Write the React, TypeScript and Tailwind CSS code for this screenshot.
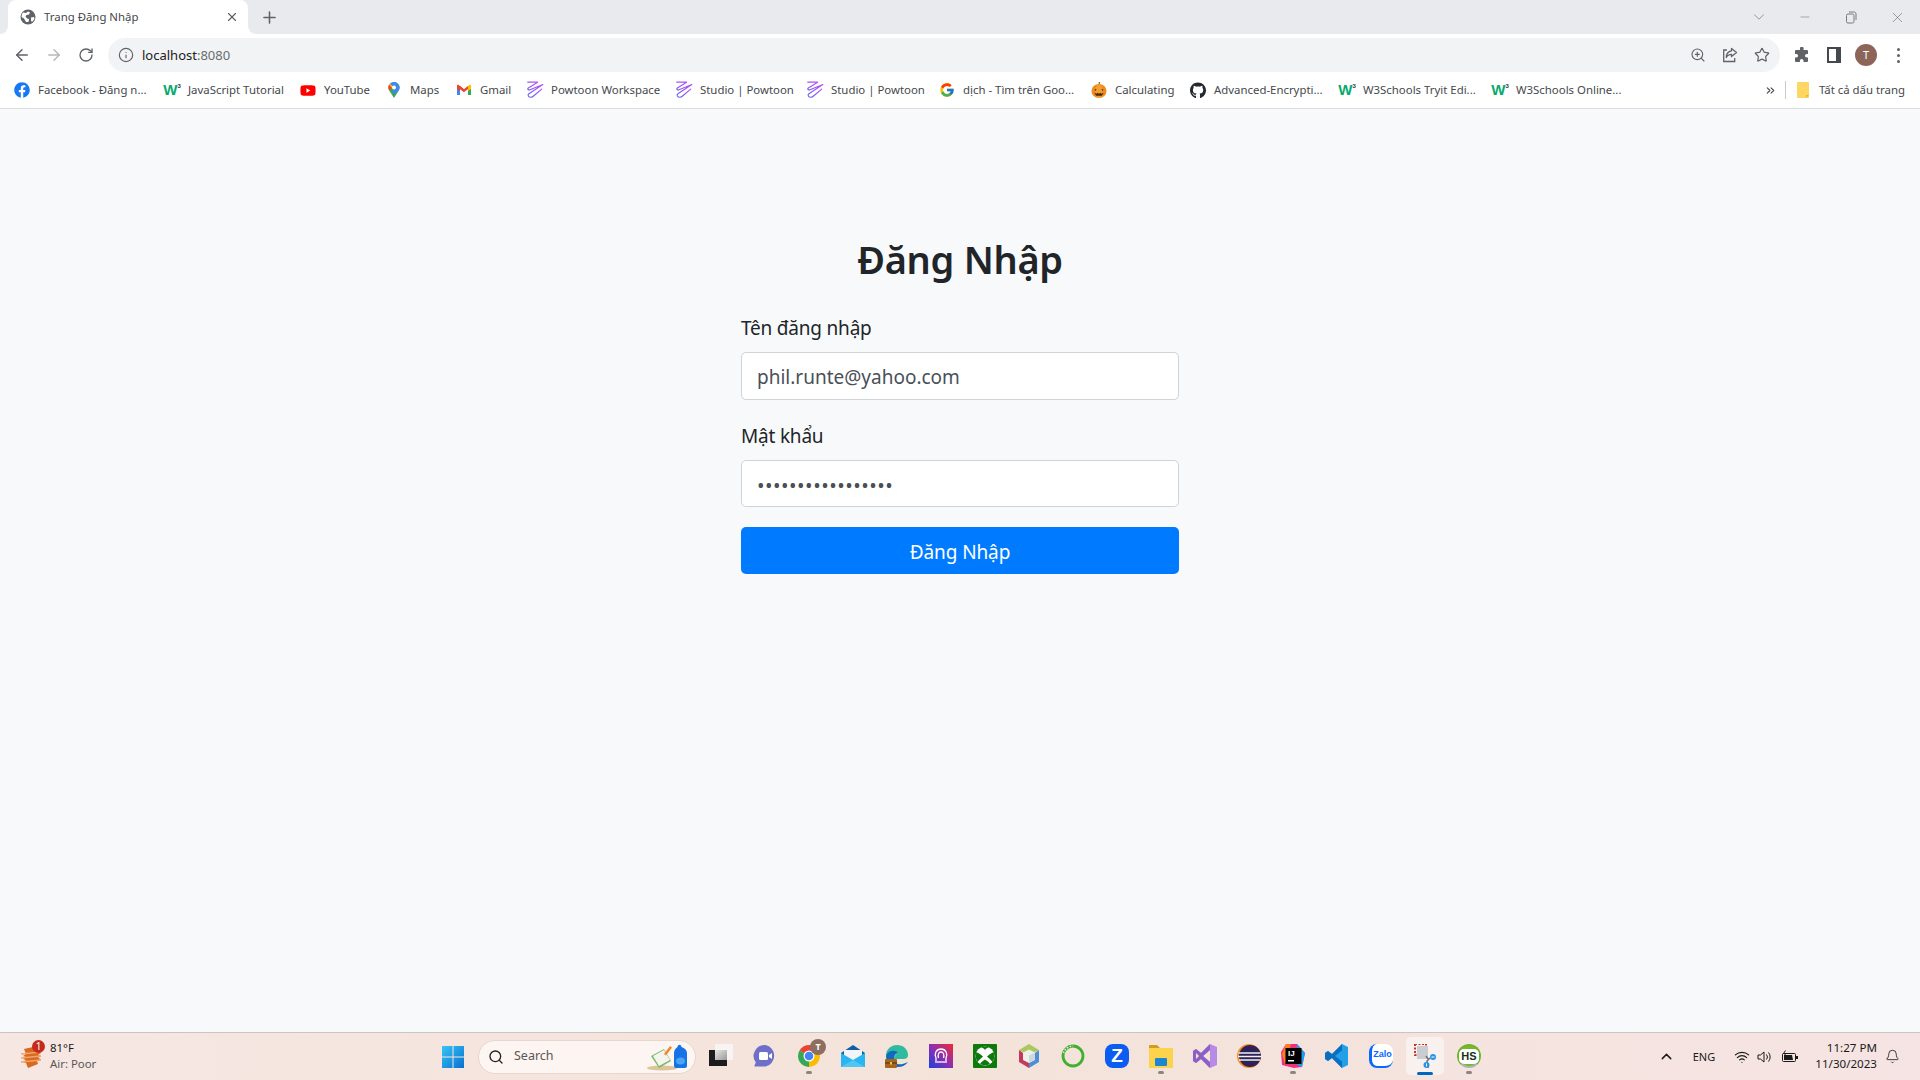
import React from "react";
import { ArrowLeft, ArrowRight, RotateCw, Info, ZoomIn, Star, Plus, X, ChevronDown, Minus, ChevronUp, Search, Bell, Wifi, ChevronsRight } from "lucide-react";
import { FaFacebook, FaGithub, FaYoutube } from "react-icons/fa";
import { FcGoogle } from "react-icons/fc";

function Globe() {
  return (
    <svg width="16" height="16" viewBox="0 0 16 16">
      <circle cx="8" cy="8" r="7.5" fill="#5f6368" />
      <path d="M3 3.5l3 .5 2-1.5 2 1-1 2-2.5.5-1 1.5 1.5 2 2 .5-.5 3L6 13 4 9.5 1.5 8 2 5z" fill="#fff" />
      <path d="M11 8.5l3-.5.5 2-2.5 3-1-1.5z" fill="#fff" />
    </svg>
  );
}

function W3() {
  return (
    <span className="flex h-4 w-4 items-start justify-center">
      <span className="font-['Liberation_Sans'] text-[15px] leading-4 font-bold text-[#04aa6d]">W</span>
      <span className="font-['Liberation_Sans'] text-[6px] leading-2 font-bold text-[#333]">3</span>
    </span>
  );
}

function Powtoon({ id }: { id: string }) {
  return (
    <svg width="18" height="18" viewBox="2 1 14.500 15.500" fill="none" className="shrink-0">
      <defs>
        <linearGradient id={id} x1="1" y1="17" x2="17" y2="1" gradientUnits="userSpaceOnUse">
          <stop offset="0" stopColor="#4b6cf5" />
          <stop offset="1" stopColor="#d946ef" />
        </linearGradient>
      </defs>
      <path d="M3 2h8.500L3.500 7c-1.200 1 .2 2 1.500 1.500L16 4 4 12c-1.600 1.200-.2 3 1.500 3 1 0 2-.5 3-1.500L15 8" stroke={`url(#${id})`} strokeWidth="1" strokeLinejoin="round" strokeLinecap="round" />
    </svg>
  );
}

function Maps() {
  return (
    <svg width="16" height="16" viewBox="0 0 16 16">
      <path d="M8 0a5.600 5.600 0 0 0-5.600 5.600c0 1.200.4 2.200 1 3.100L8 16l4.600-7.300c.6-.9 1-1.900 1-3.100A5.600 5.600 0 0 0 8 0z" fill="#34a853" />
      <path d="M3.400 8.700L8 3.200 4 1.800A5.600 5.600 0 0 0 2.400 5.600c0 1.200.4 2.200 1 3.100z" fill="#fbbc04" />
      <path d="M4 1.800L8 5.600l4.500-3.400A5.600 5.600 0 0 0 8 0a5.600 5.600 0 0 0-4 1.800z" fill="#4285f4" />
      <path d="M12.500 2.200L6 9.800 8 12l4.600-3.300c.6-.9 1-1.900 1-3.100 0-1.300-.4-2.400-1.100-3.400z" fill="#4285f4" />
      <path d="M2.900 2.800l3.200 3.100-2.700 2.800c-.6-.9-1-1.900-1-3.100 0-1 .2-2 .5-2.800z" fill="#ea4335" />
      <circle cx="8" cy="5.600" r="2" fill="#fff" />
    </svg>
  );
}

function Gmail() {
  return (
    <svg width="16" height="16" viewBox="0 0 16 16">
      <path d="M1 3.500V13h3V7l4 3V7.500L3 3.200C2 2.500 1 2.800 1 3.500z" fill="#ea4335" />
      <path d="M15 3.500V13h-3V7l-4 3V7.500l5-4.300c1-.7 2-.4 2 .3z" fill="#fbbc04" />
      <path d="M12 13h3V7l-3 2z" fill="#34a853" />
      <path d="M1 13h3V9L1 7z" fill="#4285f4" />
      <path d="M4 4l4 3.200L12 4v3l-4 3-4-3z" fill="#ea4335" />
    </svg>
  );
}

function Pumpkin() {
  return (
    <svg width="17" height="18" viewBox="0 0 17 18">
      <path d="M8 3l.3-2.500h1.500L9 3z" fill="#4a7a25" />
      <ellipse cx="8.500" cy="10" rx="8" ry="7.500" fill="#ee8a1d" />
      <ellipse cx="8.500" cy="10" rx="4" ry="7.500" fill="#f49c2e" />
      <path d="M4 8l2 .5-1.500 1.500zM13 8l-2 .5 1.500 1.500zM3.500 12l2.500 1 1-1 1.500 1 1.500-1 1 1 2.500-1-2 3H5.500z" fill="#4a2a0c" />
    </svg>
  );
}

type BM = { label: string; w: string; icon: React.ReactNode; iw?: string };
const bookmarks: BM[] = [
  { label: "Facebook - Đăng n...", w: "w-[150px]", icon: <FaFacebook size={16} color="#1877f2" /> },
  { label: "JavaScript Tutorial", w: "w-[136px]", icon: <W3 /> },
  { label: "YouTube", w: "w-[86px]", icon: <FaYoutube size={17} color="#f00" /> },
  { label: "Maps", w: "w-[70px]", icon: <Maps /> },
  { label: "Gmail", w: "w-[70px]", icon: <Gmail /> },
  { label: "Powtoon Workspace", w: "w-[149px]", icon: <Powtoon id="p1" />, iw: "w-[17px]" },
  { label: "Studio | Powtoon", w: "w-[131px]", icon: <Powtoon id="p2" />, iw: "w-[17px]" },
  { label: "Studio | Powtoon", w: "w-[133px]", icon: <Powtoon id="p3" />, iw: "w-[17px]" },
  { label: "dịch - Tìm trên Goo...", w: "w-[152px]", icon: <FcGoogle size={16} /> },
  { label: "Calculating", w: "w-[99px]", icon: <Pumpkin /> },
  { label: "Advanced-Encrypti...", w: "w-[149px]", icon: <FaGithub size={17} color="#24292e" /> },
  { label: "W3Schools Tryit Edi...", w: "w-[153px]", icon: <W3 /> },
  { label: "W3Schools Online...", w: "w-[150px]", icon: <W3 /> },
];

function TabBar() {
  return (
    <div className="flex h-[34px] items-center bg-[#e8eaed] pl-2 text-[#5f6368]">
      <div className="relative flex h-[34px] w-[240px] items-center rounded-t-lg bg-white pr-[9px] pl-3">
        <span className="absolute bottom-0 -left-2 h-2 w-2 bg-white">
          <span className="block h-2 w-2 rounded-br-lg bg-[#e8eaed]" />
        </span>
        <span className="absolute -right-2 bottom-0 h-2 w-2 bg-white">
          <span className="block h-2 w-2 rounded-bl-lg bg-[#e8eaed]" />
        </span>
        <Globe />
        <span className="ml-2 flex-1 text-[11.400px] text-[#45474a]">Trang Đăng Nhập</span>
        <X size={14} strokeWidth={2} />
      </div>
      <span className="ml-[12px]">
        <Plus size={19} strokeWidth={2} />
      </span>
      <div className="ml-auto flex items-center text-[#777a7e]">
        <span className="flex w-[46px] justify-center"><ChevronDown size={18} strokeWidth={1} /></span>
        <span className="flex w-[46px] justify-center"><Minus size={14} strokeWidth={1} /></span>
        <span className="flex w-[46px] justify-center">
          <svg width="12" height="13" viewBox="0 0 12 13" fill="none" stroke="currentColor" strokeWidth="1">
            <rect x="1.500" y="3" width="7.500" height="9" rx="1.500" />
            <path d="M4 1h4.500A2 2 0 0 1 11 3v6" />
          </svg>
        </span>
        <span className="flex w-[46px] justify-center"><X size={17} strokeWidth={1} /></span>
      </div>
    </div>
  );
}

function ToolBtn({ children }: { children: React.ReactNode }) {
  return <span className="flex w-8 items-center justify-center">{children}</span>;
}

function Toolbar() {
  return (
    <div className="flex h-[38px] bg-white pt-1 text-[#5f6368]">
      <div className="flex w-[108px] pl-[6px]">
        <ToolBtn><ArrowLeft size={18} strokeWidth={2} /></ToolBtn>
        <ToolBtn><ArrowRight size={18} strokeWidth={2} color="#b6b8bb" /></ToolBtn>
        <ToolBtn><RotateCw size={16} strokeWidth={2} /></ToolBtn>
      </div>
      <div className="flex h-[34px] w-[1672px] items-center rounded-full bg-[#f1f3f4] pr-[2px] pl-[10px]">
        <Info size={16} strokeWidth={1.700} />
        <span className="ml-2 pt-[2px] text-[13px] text-[#202124]">
          localhost<span className="text-[#6a6d70]">:8080</span>
        </span>
        <div className="ml-auto flex">
          <ToolBtn><ZoomIn size={16} strokeWidth={1.700} /></ToolBtn>
          <ToolBtn>
            <svg width="16" height="16" viewBox="0 0 16 16" fill="none" stroke="currentColor" strokeWidth="1.300">
              <path d="M5 3H1.700v11.500h11V11" />
              <path d="M9.500 1.500L14.500 5.500 9.500 9.500V7.300C7 7.300 5.200 8.500 4.300 10.500 4.300 7 6.300 4.300 9.500 3.800z" strokeLinejoin="round" />
            </svg>
          </ToolBtn>
          <ToolBtn><Star size={16} strokeWidth={1.800} /></ToolBtn>
        </div>
      </div>
      <div className="ml-[6px] flex">
        <ToolBtn>
          <svg width="16" height="16" viewBox="0 0 16 16" fill="#5f6368">
            <path d="M6 1.500a1.800 1.800 0 0 1 3.600 0V3H13a1 1 0 0 1 1 1v3h-1.200a1.800 1.800 0 0 0 0 3.600H14V14a1 1 0 0 1-1 1H9.500v-1.200a1.800 1.800 0 0 0-3.600 0V15H2a1 1 0 0 1-1-1v-3.500h1.300a1.800 1.800 0 0 0 0-3.600H1V4a1 1 0 0 1 1-1h4z" />
          </svg>
        </ToolBtn>
        <ToolBtn>
          <svg width="14" height="16" viewBox="0 0 14 16">
            <path d="M0 0h14v16H0z" fill="#45484c" />
            <path d="M2 2h7v12H2z" fill="#fff" />
          </svg>
        </ToolBtn>
        <ToolBtn>
          <span className="flex h-[22px] w-[22px] items-center justify-center rounded-full bg-[#8d6558] text-[11px] text-white">T</span>
        </ToolBtn>
        <ToolBtn>
          <span className="flex flex-col gap-[3px]">
            <span className="h-[3px] w-[3px] rounded-full bg-[#5f6368]" />
            <span className="h-[3px] w-[3px] rounded-full bg-[#5f6368]" />
            <span className="h-[3px] w-[3px] rounded-full bg-[#5f6368]" />
          </span>
        </ToolBtn>
      </div>
    </div>
  );
}

function BookmarkBar() {
  return (
    <div className="flex h-[37px] items-center border-b border-[#dadce0] bg-white pl-[14px] text-[11.400px] text-[#45484c]">
      {bookmarks.map((b, i) => (
        <div key={i} className={`flex shrink-0 items-center ${b.w}`}>
          <span className={`flex h-[18px] items-center justify-center ${b.iw ?? "w-4"}`}>{b.icon}</span>
          <span className="ml-2 whitespace-nowrap">{b.label}</span>
        </div>
      ))}
      <div className="ml-auto flex items-center">
        <ChevronsRight size={13} strokeWidth={2} />
        <span className="mr-[11px] ml-[8px] h-[18px] w-px bg-[#c8cacd]" />
        <svg width="12" height="16" viewBox="0 0 12 16">
          <path d="M1 0h10a1 1 0 0 1 1 1v15H1a1 1 0 0 1-1-1V1a1 1 0 0 1 1-1z" fill="#fdd663" />
          <path d="M9 16v-3h3z" fill="#f2b90f" />
        </svg>
        <span className="mr-[15px] ml-[10px] whitespace-nowrap">Tất cả dấu trang</span>
      </div>
    </div>
  );
}

function LoginForm() {
  return (
    <main className="flex flex-1 flex-col items-center bg-[#f8f9fa] pt-[125px]">
      <div className="flex w-[438px] flex-col">
        <h1 className="h-[52px] text-center text-[38px] leading-[50px] font-semibold tracking-[-0.3px] text-[#212529]">Đăng Nhập</h1>
        <label className="mt-[27px] h-[30px] text-[19px] leading-[30px] tracking-[-0.2px] text-[#212529]">Tên đăng nhập</label>
        <input
          readOnly
          value="phil.runte@yahoo.com"
          className="mt-[9px] h-[48px] rounded-[5px] border border-[#ced4da] bg-white px-[15px] pt-[2px] text-[19px] text-[#495057] outline-none"
        />
        <label className="mt-[21px] h-[30px] text-[19px] leading-[30px] tracking-[-0.2px] text-[#212529]">Mật khẩu</label>
        <input
          readOnly
          type="password"
          value="aaaaaaaaaaaaaaaaa"
          className="mt-[9px] h-[47px] rounded-[5px] border border-[#ced4da] bg-white px-[15px] pt-[4px] text-[20px] tracking-[0.5px] text-[#495057] outline-none"
        />
        <button className="mt-[20px] h-[47px] rounded-[5px] bg-[#007bff] pt-[4px] text-[19px] tracking-[-0.1px] text-white">Đăng Nhập</button>
      </div>
    </main>
  );
}

function TaskIcon({ children, dot, active, first }: { children: React.ReactNode; dot?: boolean; active?: boolean; first?: boolean }) {
  return (
    <div className={`relative flex h-full w-[44px] shrink-0 items-center justify-center ${first ? "ml-[3px]" : ""}`}>
      {active && <span className="absolute top-[4px] left-[3px] h-[38px] w-[38px] rounded-[5px] bg-[#f8f1ee]" />}
      <span className="relative mb-[1px] flex h-6 w-6 items-center justify-center">{children}</span>
      {dot && <span className="absolute bottom-[6px] left-[19px] h-[3px] w-[6px] rounded-full bg-[#8a8685]" />}
      {active && <span className="absolute bottom-[5px] left-[14px] h-[3px] w-4 rounded-full bg-[#0067c0]" />}
    </div>
  );
}

function Taskbar() {
  return (
    <footer className="flex h-[48px] items-center border-t border-[#c9c5c2] bg-linear-to-r from-[#f6e7e3] via-[#f4e3d9] to-[#f5e4e3] text-[#1a1a1a]">
      <div className="flex h-full w-[430px] shrink-0 items-center pl-[21px]">
        <div className="relative mt-[1px] h-[23px] w-[21px]">
          <svg width="21" height="23" viewBox="0 0 21 23">
            <path d="M3 3l9-2 5 1-1 4 4 1-3 2 3 1-3 2 3 1-4 2 1 3-10 4-2-5-3-1 3-2-3-1 3-2-3-1 3-2z" fill="#d9691e" />
            <path d="M0 8l20-2M0 12l20-2M0 16l20-2" stroke="#f3a46b" strokeWidth="1.300" />
          </svg>
          <span className="absolute -top-[6px] left-[11px] flex h-[13px] w-[13px] items-center justify-center rounded-full bg-[#c42b1c] text-[10px] leading-none text-white">1</span>
        </div>
        <div className="mb-[2px] ml-2 flex flex-col text-[11.400px] leading-[16px]">
          <span>81°F</span>
          <span className="text-[#5a5654]">Air: Poor</span>
        </div>
      </div>
      <div className="flex w-[45px] shrink-0 justify-center">
        <svg width="24" height="24" viewBox="0 0 24 24">
          <defs>
            <linearGradient id="win" x1="0" y1="0" x2="1" y2="1">
              <stop offset="0" stopColor="#36c5f5" />
              <stop offset="1" stopColor="#0a6fcf" />
            </linearGradient>
          </defs>
          <path d="M1 1h10.500v10.500H1zM12.500 1H23v10.500H12.500zM1 12.500h10.500V23H1zM12.500 12.500H23V23H12.500z" fill="url(#win)" />
        </svg>
      </div>
      <div className="ml-[3px] flex h-[34px] w-[218px] shrink-0 items-center rounded-full border border-[#e6d8d1] bg-[#fdf5f1] pl-[9px]">
        <Search size={16} strokeWidth={2} color="#222" />
        <span className="ml-[10px] text-[12.500px] text-[#5b5654]">Search</span>
        <svg className="mr-[7px] ml-auto" width="41" height="30" viewBox="0 0 41 30">
          <ellipse cx="15" cy="26" rx="15" ry="2.500" fill="#dcc59b" />
          <path d="M4 14l13-7 7 12-12 7z" fill="#7cb86a" />
          <path d="M6 14l11-6 6 10-11 6z" fill="#f3f4ee" />
          <path d="M17 12l6-8 2 1.500-6 8z" fill="#f08a24" />
          <path d="M27 24V11c0-3 2-5 3.500-6 .5-3 3.500-3 4 0 3 1 5.500 3 5.500 6v13c0 1-1 2-2 2H29c-1 0-2-1-2-2z" fill="#1673e6" />
          <ellipse cx="33.500" cy="19" rx="4.500" ry="3.500" fill="#49a4f5" />
        </svg>
      </div>

      <TaskIcon first>
        <svg width="24" height="24" viewBox="0 0 24 24">
          <defs>
            <linearGradient id="tv" x1="0" y1="0" x2="1" y2="1">
              <stop offset="0" stopColor="#e9e7e5" />
              <stop offset="1" stopColor="#9b9997" />
            </linearGradient>
          </defs>
          <rect x="0" y="6" width="18" height="16" fill="#1c1c1c" />
          <rect x="6" y="0" width="18" height="16" fill="#f7f5f3" />
          <rect x="6" y="6" width="12" height="10" fill="url(#tv)" />
        </svg>
      </TaskIcon>
      <TaskIcon>
        <svg width="24" height="24" viewBox="0 0 24 24">
          <path d="M12.500 1a11 11 0 0 1 0 21.500H2c-.5 0-.8-.4-.5-1l1.300-3A11 11 0 0 1 12.500 1z" fill="#6e6fc9" />
          <rect x="6" y="8" width="9" height="8" rx="1.500" fill="#fff" />
          <path d="M16 11l3-2v6l-3-2z" fill="#fff" />
        </svg>
      </TaskIcon>
      <TaskIcon dot>
        <svg width="24" height="24" viewBox="0 0 24 24">
          <path d="M12 12L2.500 6.500A11 11 0 0 1 21.500 6.500z" fill="#ea4335" />
          <path d="M12 12L21.500 6.500A11 11 0 0 1 12 23z" fill="#fbbc04" />
          <path d="M12 12L12 23A11 11 0 0 1 2.500 6.500z" fill="#34a853" />
          <circle cx="12" cy="12" r="5.500" fill="#fff" />
          <circle cx="12" cy="12" r="4.300" fill="#4285f4" />
        </svg>
        <span className="absolute -top-[5px] left-[13px] flex h-4 w-4 items-center justify-center rounded-full bg-[#8d6e60] text-[9px] font-bold text-white">T</span>
      </TaskIcon>
      <TaskIcon>
        <svg width="24" height="24" viewBox="0 0 24 24">
          <path d="M12 1L0 9v14h24V9z" fill="#0f5fa8" />
          <path d="M3 6h18v6l-9 5-9-5z" fill="#f2f5f8" />
          <path d="M0 9l12 7 12-7v14H0z" fill="#29b6f0" />
          <path d="M0 23l12-7 12 7z" fill="#4fc6f5" />
        </svg>
      </TaskIcon>
      <TaskIcon>
        <svg width="24" height="24" viewBox="0 0 24 24">
          <path d="M1 12C1 5 6 1 12 1c6 0 11 4 11 10 0 3-2 4-5 4H9c0-4 3-6 5-6-2-2-6-1-9 1z" fill="#2fbb9d" />
          <path d="M1 12c1-3 4-6 9-5 3 1 4 2 4 2-3 0-5 2-5 6 0 4 4 8 14 3-2 3-6 5-10 5C6 23 1 18 1 12z" fill="#0f6bc2" />
          <rect x="0" y="15" width="12" height="9" rx="1" fill="#a5651e" />
          <rect x="0" y="18" width="12" height="2" fill="#7c4912" />
          <rect x="5" y="18" width="2" height="2.500" fill="#f0c14b" />
        </svg>
      </TaskIcon>
      <TaskIcon>
        <svg width="24" height="24" viewBox="0 0 24 24">
          <defs>
            <linearGradient id="cam" x1="0" y1="1" x2="1" y2="0">
              <stop offset="0" stopColor="#1b3fe0" />
              <stop offset="0.5" stopColor="#8e2fb0" />
              <stop offset="1" stopColor="#ee2a35" />
            </linearGradient>
          </defs>
          <rect width="24" height="24" fill="url(#cam)" />
          <path d="M7 17v-3c-2-4 0-9 5-9s7 5 5 9v3M9.500 14c-1-3 0-6 2.500-6s3.500 3 2.500 6" fill="none" stroke="#fff" strokeWidth="1.300" />
          <path d="M6 18h12" stroke="#fff" strokeWidth="1.300" />
        </svg>
      </TaskIcon>
      <TaskIcon>
        <svg width="24" height="24" viewBox="0 0 24 24">
          <rect width="24" height="24" rx="1" fill="#0e7a0d" />
          <circle cx="12" cy="12" r="9.500" fill="#fff" />
          <path d="M8 3.200Q12 4.500 12 6.500Q12 4.500 16 3.200Q12 2 8 3.200z" fill="#0e7a0d" />
          <path d="M3.500 8Q7 9.500 10 12.500Q6 16 4.500 18Q1.500 13 3.500 8z" fill="#0e7a0d" />
          <path d="M20.500 8Q17 9.500 14 12.500Q18 16 19.500 18Q22.500 13 20.500 8z" fill="#0e7a0d" />
          <path d="M12 15.500Q8.500 17.500 7 20Q12 22.500 17 20Q15.500 17.500 12 15.500z" fill="#0e7a0d" />
        </svg>
      </TaskIcon>
      <TaskIcon>
        <svg width="24" height="24" viewBox="0 0 24 24">
          <path d="M12 0l10 6L12 11 2 6z" fill="#a9c95f" />
          <path d="M2 6v12l10 6V19l-6-3V9z" fill="#c33a5c" />
          <path d="M22 6v12l-10 6V19l6-3V9z" fill="#4d8fd6" />
          <path d="M6 8.500l6-3 6 3v7l-6 3-6-3z" fill="#eef0ea" />
          <path d="M12 11.500l6-3v7l-6 3z" fill="#cfd6dc" />
        </svg>
      </TaskIcon>
      <TaskIcon>
        <svg width="24" height="24" viewBox="0 0 24 24" fill="none">
          <circle cx="12" cy="12" r="10" stroke="#3fb02f" strokeWidth="2.800" />
          <path d="M2.500 9A10 10 0 0 1 12 2" stroke="#f4e3d9" strokeWidth="1.500" strokeDasharray="1.500 1.500" />
        </svg>
      </TaskIcon>
      <TaskIcon>
        <span className="flex h-6 w-6 items-center justify-center rounded-[8px] bg-[#0b5cf0] font-['Liberation_Sans'] text-[19px] font-bold text-white">Z</span>
      </TaskIcon>
      <TaskIcon dot>
        <svg width="24" height="24" viewBox="0 0 24 24">
          <path d="M0 2a1 1 0 0 1 1-1h7l3 3h12a1 1 0 0 1 1 1v3H0z" fill="#d69a1c" />
          <rect x="0" y="4" width="24" height="20" rx="1" fill="#fbd34d" />
          <rect x="6" y="14" width="12" height="8" rx="1" fill="#1b87d1" />
        </svg>
      </TaskIcon>
      <TaskIcon>
        <svg width="24" height="24" viewBox="0 0 24 24">
          <path d="M17 0l7 3v18l-7 3-9-9-5 4-3-2V7l3-2 5 4z" fill="#b78ae6" />
          <path d="M17 6v12l-7-6z" fill="#f4e3d9" />
          <path d="M17 0L8 9l-5-4-3 2v10l3 2 5-4 9 9V18l-7-6 7-6z" fill="#8a5fc7" />
          <path d="M3 9l3 3-3 3z" fill="#f4e3d9" />
        </svg>
      </TaskIcon>
      <TaskIcon>
        <svg width="24" height="24" viewBox="0 0 24 24">
          <circle cx="12" cy="12" r="12" fill="#f08f2a" />
          <circle cx="13" cy="12" r="11" fill="#2c2255" />
          <path d="M1.500 9h22M1 12.500h23M2 16h21" stroke="#f2f0f5" strokeWidth="1.400" />
        </svg>
      </TaskIcon>
      <TaskIcon dot>
        <svg width="24" height="24" viewBox="0 0 24 24">
          <path d="M5 0h11l8 9-3 14-8 1-12-3L0 8z" fill="#f0317f" />
          <path d="M16 0l8 9-3 14-6-3z" fill="#18a2ee" />
          <path d="M1 10l4-10h5L4 20z" fill="#fc801d" />
          <rect x="4.500" y="4" width="16" height="16" fill="#000" />
          <rect x="7" y="16" width="6" height="1.500" fill="#fff" />
        </svg>
        <span className="absolute top-[6px] left-[7px] font-['Liberation_Sans'] text-[8px] leading-none font-bold text-white">IJ</span>
      </TaskIcon>
      <TaskIcon>
        <svg width="24" height="24" viewBox="0 0 24 24">
          <path d="M17 0l6 3v18l-6 3L7 14l-4 3-3-2V9l3-2 4 3z" fill="#1fa0e8" />
          <path d="M17 0L7 10 3 7 0 9v6l3 2 4-3 10 10z M17 6.500v11L10 12z" fill="#0b6fbf" fillRule="evenodd" />
        </svg>
      </TaskIcon>
      <TaskIcon>
        <span className="flex h-6 w-6 items-center justify-center rounded-[8px] border-b-[2px] border-l-[3px] border-[#0a68ff] bg-white font-['Liberation_Sans'] text-[9px] font-bold text-[#0a68ff]">Zalo</span>
      </TaskIcon>
      <TaskIcon active>
        <svg width="24" height="24" viewBox="0 0 24 24" fill="none">
          <rect x="2" y="0" width="11" height="11" stroke="#c8352b" strokeWidth="2" strokeDasharray="2 1.500" />
          <rect x="4" y="2" width="11" height="13" fill="#c9ccd0" />
          <path d="M13 12l3 4M17 14l-3 3 1 7" stroke="#6d7378" strokeWidth="1.500" />
          <circle cx="20" cy="13" r="3" fill="#2793e6" />
          <circle cx="13.500" cy="21" r="3" fill="#2793e6" />
          <path d="M18.500 13h3M13.500 19.500v3" stroke="#fff" strokeWidth="1" />
        </svg>
      </TaskIcon>
      <TaskIcon dot>
        <span className="flex h-6 w-6 items-center justify-center rounded-full border-[2px] border-t-[#6fb52c] border-r-[#6fb52c] border-b-[#a9b5ad] border-l-[#6fb52c] bg-[#78b82f]">
          <span className="flex h-[15px] w-[20px] items-center justify-center rounded-[5px] bg-white font-['Liberation_Sans'] text-[11px] font-bold text-[#16301a]">HS</span>
        </span>
      </TaskIcon>

      <div className="ml-auto flex h-full items-center pr-4">
        <span className="flex w-8 justify-center"><ChevronUp size={17} strokeWidth={2} /></span>
        <span className="flex w-[44px] justify-center pt-[2px] text-[11px]">ENG</span>
        <span className="ml-1 flex w-6 justify-center"><Wifi size={16} strokeWidth={1.700} /></span>
        <span className="flex w-[22px] justify-center">
          <svg width="16" height="16" viewBox="0 0 16 16" fill="none" stroke="#1a1a1a" strokeWidth="1">
            <path d="M1 6h2.500L7 3v10l-3.500-3H1z" strokeLinejoin="round" />
            <path d="M9.500 5.500a4 4 0 0 1 0 5M11.500 3.500a7 7 0 0 1 0 9" />
          </svg>
        </span>
        <span className="flex w-[28px] justify-center">
          <svg width="18" height="14" viewBox="0 0 18 14" fill="none">
            <rect x="1.500" y="3.500" width="13" height="8" rx="1" stroke="#1a1a1a" />
            <path d="M3 5h8l1 5H3z" fill="#1a1a1a" />
            <path d="M15 6h2v3h-2z" fill="#1a1a1a" />
            <path d="M4.500 .5L2.500 3.500h2l-1 2" stroke="#1a1a1a" />
          </svg>
        </span>
        <div className="mb-[2px] flex w-[73px] flex-col text-right text-[11.600px] leading-[16px]">
          <span className="whitespace-nowrap">11:27 PM</span>
          <span className="whitespace-nowrap">11/30/2023</span>
        </div>
        <span className="ml-[3px] flex w-6 justify-center"><Bell size={15} strokeWidth={1.300} /></span>
      </div>
    </footer>
  );
}

export default function App() {
  return (
    <div className="flex h-[1080px] w-[1920px] flex-col overflow-hidden font-['Noto_Sans','Liberation_Sans',sans-serif]">
      <TabBar />
      <Toolbar />
      <BookmarkBar />
      <LoginForm />
      <Taskbar />
    </div>
  );
}
